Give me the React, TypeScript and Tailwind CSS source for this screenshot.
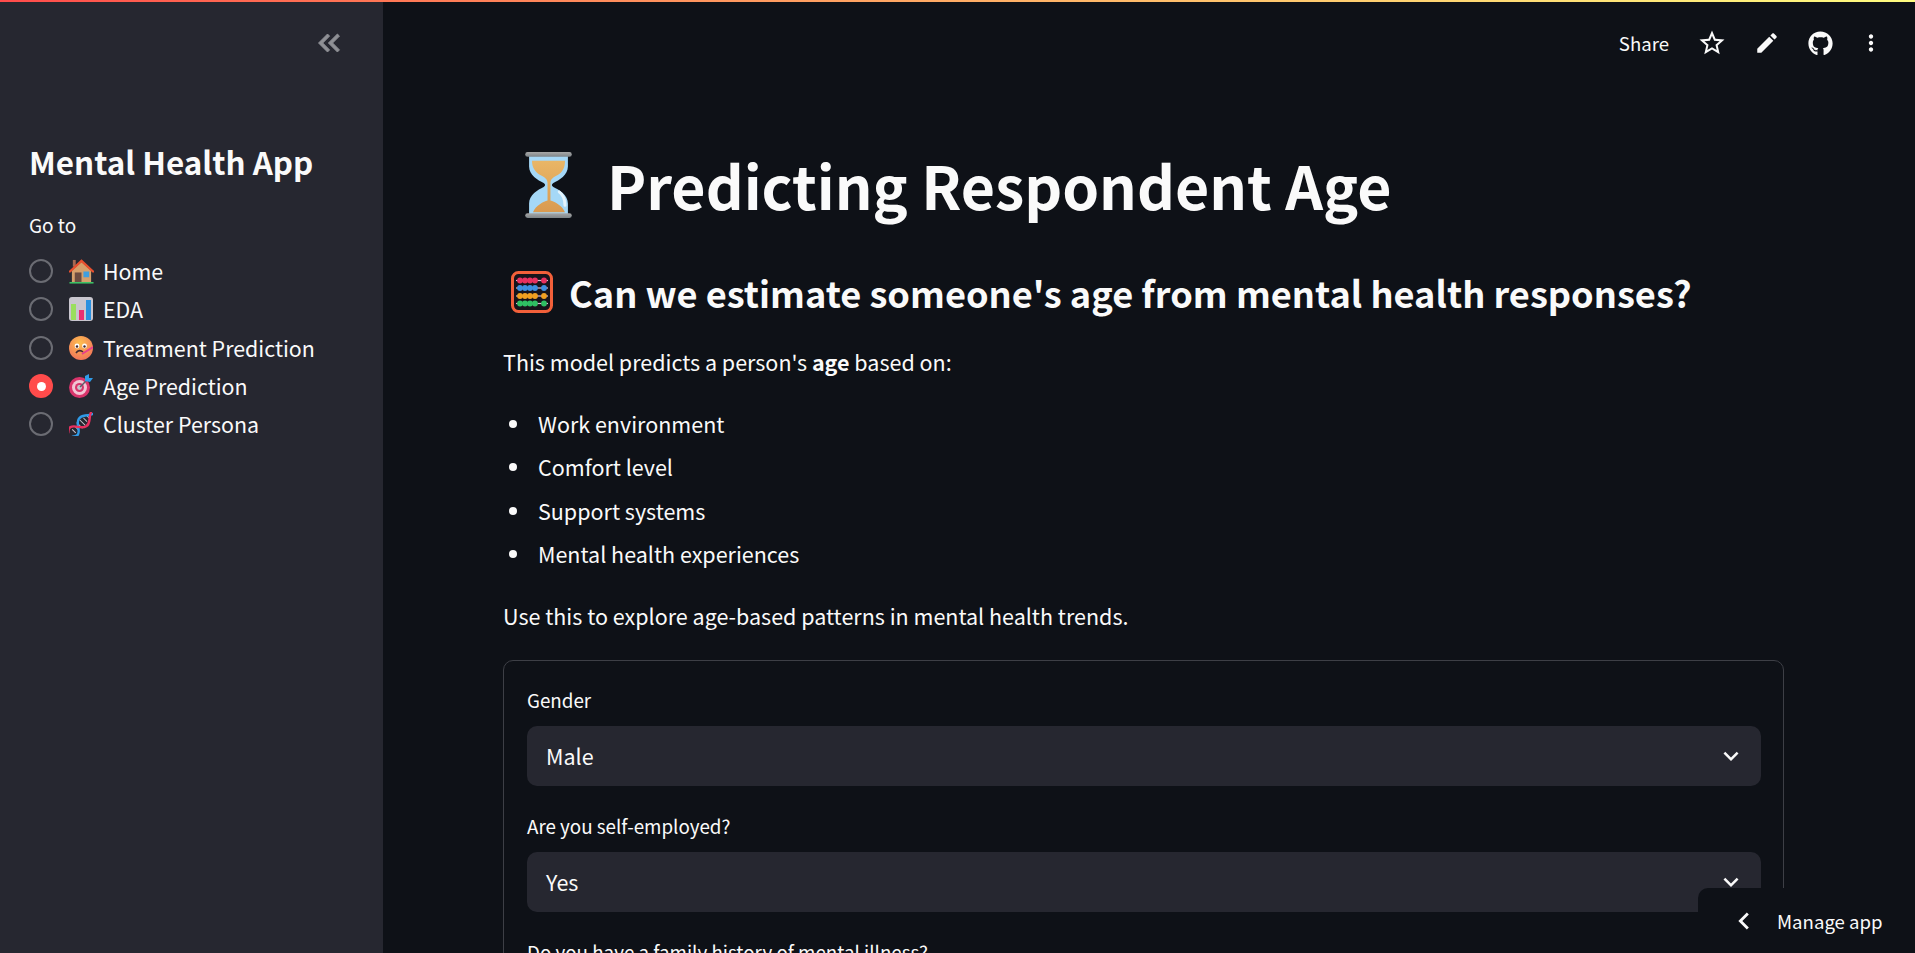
import { FaGithub } from "react-icons/fa";

const Hourglass = () => (
  <svg viewBox="0 0 48 68" className="w-[47px] h-[66px] shrink-0">
    <defs>
      <linearGradient id="cap" x1="0" y1="0" x2="0" y2="1">
        <stop offset="0" stopColor="#a8a8a8" />
        <stop offset="1" stopColor="#7d8488" />
      </linearGradient>
      <linearGradient id="sand" x1="0" y1="0" x2="0" y2="1">
        <stop offset="0" stopColor="#e9b666" />
        <stop offset="1" stopColor="#d99a50" />
      </linearGradient>
    </defs>
    <path d="M4 3h40v12c0 9-9 14-15 17-2 1-2 3 0 4 6 3 15 8 15 17v12H4V53c0-9 9-14 15-17 2-1 2-3 0-4C13 29 4 24 4 15z" fill="#a5d8f7" />
    <path d="M7 9h34c0 8-3 12-8 15-4 2-7 4-7 8v18c4 1 12 5 15 12H8c3-7 11-11 15-12V32c0-4-3-6-7-8-5-3-9-7-9-15z" fill="url(#sand)" />
    <path d="M35 41c4 3 6 7 6 14" stroke="#e4f4fd" strokeWidth="3" fill="none" strokeLinecap="round" />
    <rect x="0" y="0" width="48" height="5" rx="2.5" fill="url(#cap)" />
    <rect x="0" y="63" width="48" height="5" rx="2.5" fill="url(#cap)" />
  </svg>
);

const Abacus = () => {
  const rows = [
    { y: 9.5, c: "#e8305f" },
    { y: 17, c: "#3c8fe0" },
    { y: 25, c: "#f0a020" },
    { y: 32.5, c: "#2fbf63" },
  ];
  return (
    <svg viewBox="0 0 42 42" className="w-[42px] h-[42px] shrink-0">
      <rect x="1.5" y="1.5" width="39" height="39" rx="6" fill="#17141b" stroke="#f2603a" strokeWidth="3" />
      {rows.map((r) => (
        <g key={r.y}>
          <rect x="5" y={r.y - 0.6} width="32" height="1.2" fill="#d8b8d0" />
          {[9, 14, 19, 24, 33].map((x) => (
            <circle key={x} cx={x} cy={r.y} r="2.9" fill={r.c} />
          ))}
        </g>
      ))}
    </svg>
  );
};

const House = () => (
  <svg viewBox="0 0 26 26" className="w-[25px] h-[25px]">
    <rect x="4" y="1" width="3" height="7" fill="#a56953" />
    <path d="M13 3 23 12v12H3V12z" fill="#d6a06c" />
    <rect x="6" y="14" width="7" height="10" fill="#6d4c41" />
    <rect x="15" y="13" width="6" height="6" fill="#3f9fe0" />
    <path d="M1 13 13 2l12 11" stroke="#e8502f" strokeWidth="2.4" fill="none" strokeLinecap="round" />
    <rect x="0.5" y="24" width="25" height="1.5" fill="#3fcf6a" />
  </svg>
);

const Chart = () => (
  <svg viewBox="0 0 24 24" className="w-[24px] h-[24px]">
    <rect width="24" height="24" rx="3" fill="#c9c6cf" />
    <rect x="2" y="7" width="5" height="16" fill="#9adf5e" />
    <rect x="10" y="13" width="5" height="10" fill="#ea2f72" />
    <rect x="17" y="3" width="5" height="20" fill="#2a90e0" />
  </svg>
);

const Sick = () => (
  <svg viewBox="0 0 24 24" className="w-[24px] h-[24px]">
    <defs>
      <radialGradient id="face" cx="0.45" cy="0.3" r="0.75">
        <stop offset="0" stopColor="#fdc04f" />
        <stop offset="1" stopColor="#f0705a" />
      </radialGradient>
    </defs>
    <circle cx="12" cy="12" r="12" fill="url(#face)" />
    <circle cx="8" cy="10" r="2.4" fill="#fff" />
    <circle cx="15.5" cy="10" r="2.4" fill="#fff" />
    <circle cx="8" cy="10.5" r="1.2" fill="#402a32" />
    <circle cx="15.5" cy="10.5" r="1.2" fill="#402a32" />
    <path d="M7 17c2-3 5-3 7-1" stroke="#402a32" strokeWidth="1.6" fill="none" />
    <path d="M13 18 24 11" stroke="#e8408a" strokeWidth="2" />
  </svg>
);

const Target = () => (
  <svg viewBox="0 0 24 24" className="w-[24px] h-[24px]">
    <circle cx="10.5" cy="13.5" r="10.5" fill="#d8346b" />
    <circle cx="10.5" cy="13.5" r="7.5" fill="#f1c6d4" />
    <circle cx="10.5" cy="13.5" r="4.5" fill="#d8346b" />
    <circle cx="10.5" cy="13.5" r="2.4" fill="#c9c6cf" />
    <path d="M11 13 20 4" stroke="#5a5f6a" strokeWidth="1.5" />
    <path d="M16 2 20 0 20 4 24 4 21 8 16 7z" fill="#2f9be8" />
  </svg>
);

const Dna = () => (
  <svg viewBox="0 0 24 24" className="w-[24px] h-[24px]">
    <g transform="rotate(-45 12 12)">
      <path d="M6 9.5v5M10 8v8M14 8v8M18 9.5v5M2 9.5v5M22 9.5v5" stroke="#c9c6cf" strokeWidth="1" />
      <path d="M-3 15C1 19 4 18 8 12s8-7 13-3 5 4 6 4" stroke="#2f9be8" strokeWidth="2.4" fill="none" strokeLinecap="round" />
      <path d="M-3 9C1 5 4 6 8 12s8 7 13 3 5-4 6-4" stroke="#e8305f" strokeWidth="2.4" fill="none" strokeLinecap="round" />
    </g>
  </svg>
);

const pages = [
  { label: "Home", icon: <House /> },
  { label: "EDA", icon: <Chart /> },
  { label: "Treatment Prediction", icon: <Sick /> },
  { label: "Age Prediction", icon: <Target />, active: true },
  { label: "Cluster Persona", icon: <Dna /> },
];

const points = ["Work environment", "Comfort level", "Support systems", "Mental health experiences"];

const Field = ({ label, value }: { label: string; value?: string }) => (
  <div>
    <p className="text-[18.8px] leading-[24px] text-[#fafafa]">{label}</p>
    {value && (
      <div className="mt-[14px] mb-[28px] h-[60px] rounded-[10px] bg-[#262730] flex items-center justify-between pl-[19px] pr-[15px] text-[21.5px] text-[#fafafa]">
        <span>{value}</span>
        <svg viewBox="0 0 24 24" className="w-[30px] h-[30px]" fill="#fafafa">
          <path d="M7.41 8.59 12 13.17l4.59-4.58L18 10l-6 6-6-6z" />
        </svg>
      </div>
    )}
  </div>
);

export default function App() {
  return (
    <div
      className="relative h-screen overflow-hidden flex bg-[#0e1117] text-[#fafafa]"
      style={{ fontFamily: '"Noto Sans CJK SC", "Noto Sans", sans-serif' }}
    >
      <div className="absolute top-0 left-0 right-0 h-[2px] bg-gradient-to-r from-[#ff4b4b] to-[#fffd80]" />

      {/* sidebar */}
      <aside className="w-[383px] shrink-0 bg-[#262730] px-[29px] pt-[25px]">
        <div className="flex justify-end pr-[7px]">
          <svg viewBox="0 0 24 24" className="w-[36px] h-[36px]" fill="#8f9095" stroke="#8f9095" strokeWidth="0.6">
            <path d="M17.59 18 19 16.59 14.42 12 19 7.41 17.59 6l-6 6z" />
            <path d="M11 18l1.41-1.41L7.83 12l4.58-4.59L11 6l-6 6z" />
          </svg>
        </div>
        <h2 className="mt-[79px] text-[31.4px] leading-[44px] font-semibold">Mental Health App</h2>
        <p className="mt-[29px] text-[19px] leading-[24px]">Go to</p>
        <ul className="mt-[15px]">
          {pages.map((p) => (
            <li key={p.label} className="h-[38.3px] flex items-center text-[21.4px]">
              {p.active ? (
                <span className="w-[24px] h-[24px] rounded-full bg-[#ff4b4b] flex items-center justify-center">
                  <span className="w-[9px] h-[9px] rounded-full bg-white" />
                </span>
              ) : (
                <span className="w-[24px] h-[24px] rounded-full border-2 border-[#6b6c73]" />
              )}
              <span className="ml-[16px] w-[34px] flex">{p.icon}</span>
              <span>{p.label}</span>
            </li>
          ))}
        </ul>
      </aside>

      {/* main */}
      <main className="flex-1 min-w-0 pl-[120px] pr-[131px]">
        <div className="h-[86px] -mr-[131px] flex items-center justify-end pr-[31px]">
          <span className="text-[18.6px] leading-[24px] mr-[28px]">Share</span>
          <svg viewBox="0 0 24 24" className="w-[30px] h-[30px] mr-[27px]" fill="#fafafa">
            <path d="M22 9.24l-7.19-.62L12 2 9.19 8.63 2 9.24l5.46 4.73L5.82 21 12 17.27 18.18 21l-1.63-7.03L22 9.24zM12 15.4l-3.76 2.27 1-4.28-3.32-2.88 4.38-.38L12 6.1l1.71 4.04 4.38.38-3.32 2.88 1 4.28L12 15.4z" />
          </svg>
          <svg viewBox="0 0 24 24" className="w-[26px] h-[26px] mr-[28px]" fill="#fafafa">
            <path d="M3 17.25V21h3.75L17.81 9.94l-3.75-3.75L3 17.25zM20.71 7.04c.39-.39.39-1.02 0-1.41l-2.34-2.34c-.39-.39-1.02-.39-1.41 0l-1.83 1.83 3.75 3.75 1.83-1.83z" />
          </svg>
          <FaGithub className="w-[25px] h-[25px] mr-[25px] text-[#fafafa]" />
          <svg viewBox="0 0 24 24" className="w-[26px] h-[26px]" fill="#fafafa">
            <path d="M12 8c1.1 0 2-.9 2-2s-.9-2-2-2-2 .9-2 2 .9 2 2 2zm0 2c-1.1 0-2 .9-2 2s.9 2 2 2 2-.9 2-2-.9-2-2-2zm0 6c-1.1 0-2 .9-2 2s.9 2 2 2 2-.9 2-2-.9-2-2-2z" />
          </svg>
        </div>

        <h1 className="mt-[64px] pl-[22px] flex items-center gap-[35px] text-[59px] leading-[70px] font-bold">
          <Hourglass />
          <span>Predicting Respondent Age</span>
        </h1>
        <h2 className="mt-[46px] pl-[8px] flex items-center gap-[16px] text-[36.2px] leading-[52px] font-semibold whitespace-nowrap">
          <Abacus />
          <span>Can we estimate someone's age from mental health responses?</span>
        </h2>
        <p className="mt-[28px] text-[21.5px] leading-[32px]">
          This model predicts a person's <strong className="font-bold">age</strong> based on:
        </p>
        <ul className="mt-[24px] pl-[35px]">
          {points.map((t) => (
            <li key={t} className="relative h-[43.5px] flex items-center text-[21.5px]">
              <span className="absolute -left-[29px] w-[8px] h-[8px] rounded-full bg-[#fafafa]" />
              {t}
            </li>
          ))}
        </ul>
        <p className="mt-[24px] text-[21.5px] leading-[32px]">Use this to explore age-based patterns in mental health trends.</p>

        <section className="mt-[28px] border border-[#3d3f46] rounded-[10px] pl-[23px] pr-[22px] pt-[27px]">
          <Field label="Gender" value="Male" />
          <Field label="Are you self-employed?" value="Yes" />
          <Field label="Do you have a family history of mental illness?" />
        </section>
      </main>

      <div className="absolute right-0 bottom-0 w-[217px] h-[65px] bg-[#0e1117] rounded-tl-[10px] flex items-center pl-[29px]">
        <svg viewBox="0 0 24 24" className="w-[34px] h-[34px]" fill="#fafafa">
          <path d="M15.41 7.41 14 6l-6 6 6 6 1.41-1.41L10.83 12z" />
        </svg>
        <span className="ml-[16px] text-[18.6px] leading-[24px]">Manage app</span>
      </div>
    </div>
  );
}
